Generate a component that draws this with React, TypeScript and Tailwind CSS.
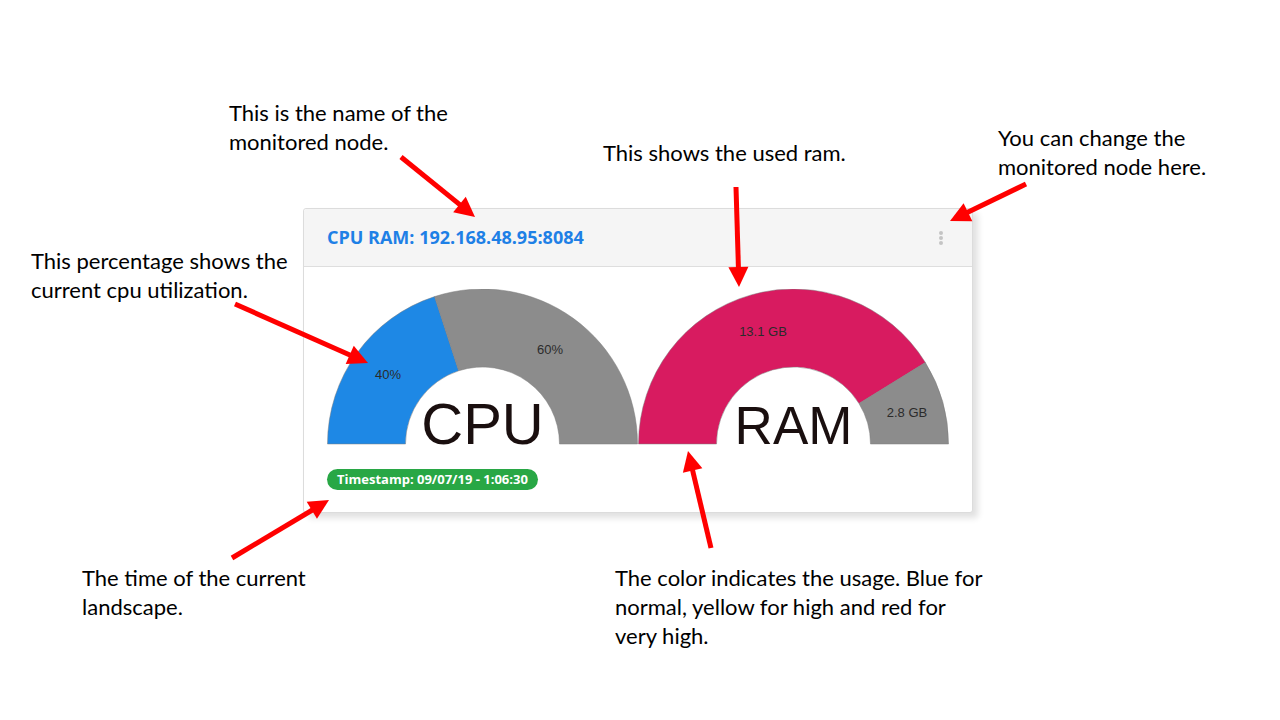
import React from "react";

type Seg = { value: number; color: string; label: string; lx: number; ly: number };

const R_OUT = 155;
const R_IN = 77;
const CX = 155.5;
const CY = 155;

function arcPath(a0: number, a1: number) {
  // angles in degrees, 180 = left, 0 = right
  const r = (d: number) => (d * Math.PI) / 180;
  const p = (rad: number, a: number) => [CX + rad * Math.cos(r(a)), CY - rad * Math.sin(r(a))];
  const [x0, y0] = p(R_OUT, a0);
  const [x1, y1] = p(R_OUT, a1);
  const [x2, y2] = p(R_IN, a1);
  const [x3, y3] = p(R_IN, a0);
  return `M${x0} ${y0} A${R_OUT} ${R_OUT} 0 0 1 ${x1} ${y1} L${x2} ${y2} A${R_IN} ${R_IN} 0 0 0 ${x3} ${y3} Z`;
}

function Gauge({ segs, title, size }: { segs: Seg[]; title: string; size: number }) {
  const total = segs.reduce((s, x) => s + x.value, 0);
  let a = 180;
  return (
    <svg width={311} height={156} viewBox="0 0 311 156" className="block">
      {segs.map((s, i) => {
        const a0 = a;
        const a1 = a - (s.value / total) * 180;
        a = a1;
        return (
          <path key={i} d={arcPath(a0, a1)} fill={s.color} stroke="#7d7d7d" strokeWidth={0.5} />
        );
      })}
      {segs.map((s, i) => (
        <text
          key={"t" + i}
          x={s.lx}
          y={s.ly}
          textAnchor="middle"
          fontSize={13}
          fill="#2b2b2b"
          fontFamily="'Liberation Sans', Arial, sans-serif"
        >
          {s.label}
        </text>
      ))}
      <text
        x={CX}
        y={154.5}
        textAnchor="middle"
        fontSize={size}
        fill="#1a0f0f"
        fontFamily="'Liberation Sans', Arial, sans-serif"
      >
        {title}
      </text>
    </svg>
  );
}

function Arrow({ x1, y1, x2, y2 }: { x1: number; y1: number; x2: number; y2: number }) {
  const dx = x2 - x1;
  const dy = y2 - y1;
  const len = Math.hypot(dx, dy);
  const ux = dx / len;
  const uy = dy / len;
  const hl = 20;
  const hw = 10;
  const bx = x2 - ux * hl;
  const by = y2 - uy * hl;
  const px = -uy;
  const py = ux;
  return (
    <g>
      <line x1={x1} y1={y1} x2={bx + ux * 2} y2={by + uy * 2} stroke="#ff0000" strokeWidth={5} />
      <polygon
        points={`${x2},${y2} ${bx + px * hw},${by + py * hw} ${bx - px * hw},${by - py * hw}`}
        fill="#ff0000"
      />
    </g>
  );
}

function Note({ x, y, children }: { x: number; y: number; children: React.ReactNode }) {
  return (
    <div
      className="absolute text-[22px] leading-[29px] text-black whitespace-nowrap font-['Lato',sans-serif]"
      style={{ left: x, top: y }}
    >
      {children}
    </div>
  );
}

export default function App() {
  return (
    <div className="relative w-[1280px] h-[720px] bg-white overflow-hidden">
      <div className="pt-[208px] pl-[303px]">
        <div className="w-[670px] h-[305px] bg-white border border-[#dcdcdc] rounded-[3px] shadow-[5px_5px_6px_rgba(0,0,0,0.12)] flex flex-col">
          <div className="h-[58px] bg-[#f5f5f5] border-b border-[#dedede] flex items-center justify-between pl-[23px] pr-[29px] rounded-t-[3px]">
            <span className="text-[18px] font-bold text-[#1e80e6] font-['Open_Sans',sans-serif]">
              CPU RAM: 192.168.48.95:8084
            </span>
            <div className="flex flex-col gap-[1px]">
              <span className="w-[4px] h-[4px] rounded-full bg-[#c4c4c4]" />
              <span className="w-[4px] h-[4px] rounded-full bg-[#c4c4c4]" />
              <span className="w-[4px] h-[4px] rounded-full bg-[#c4c4c4]" />
            </div>
          </div>
          <div className="pl-[23px] pt-[22px]">
            <div className="flex">
              <Gauge
                title="CPU"
                size={58}
                segs={[
                  { value: 40, color: "#1e88e5", label: "40%", lx: 61, ly: 90 },
                  { value: 60, color: "#8c8c8c", label: "60%", lx: 223, ly: 65 },
                ]}
              />
              <Gauge
                title="RAM"
                size={53}
                segs={[
                  { value: 13.1, color: "#d81b60", label: "13.1 GB", lx: 125, ly: 47 },
                  { value: 2.8, color: "#8c8c8c", label: "2.8 GB", lx: 269, ly: 128 },
                ]}
              />
            </div>
            <div className="mt-[21px]">
              <span className="inline-block bg-[#28a745] text-white text-[13px] font-bold leading-[21px] px-[10px] rounded-full font-['Open_Sans',sans-serif]">
                Timestamp: 09/07/19 - 1:06:30
              </span>
            </div>
          </div>
        </div>
      </div>

      <Note x={229} y={98}>
        This is the name of the
        <br />
        monitored node.
      </Note>
      <Note x={603} y={138}>This shows the used ram.</Note>
      <Note x={998} y={123}>
        You can change the
        <br />
        monitored node here.
      </Note>
      <Note x={31} y={246}>
        This percentage shows the
        <br />
        current cpu utilization.
      </Note>
      <Note x={82} y={563}>
        The time of the current
        <br />
        landscape.
      </Note>
      <Note x={615} y={563}>
        The color indicates the usage. Blue for
        <br />
        normal, yellow for high and red for
        <br />
        very high.
      </Note>

      <svg className="absolute inset-0 pointer-events-none" width={1280} height={720}>
        <Arrow x1={401} y1={157} x2={475} y2={217} />
        <Arrow x1={1026} y1={184} x2={950} y2={221} />
        <Arrow x1={736} y1={187} x2={739} y2={287} />
        <Arrow x1={235} y1={304} x2={368} y2={363} />
        <Arrow x1={232} y1={558} x2={329} y2={500} />
        <Arrow x1={711} y1={548} x2={688} y2={451} />
      </svg>
    </div>
  );
}
